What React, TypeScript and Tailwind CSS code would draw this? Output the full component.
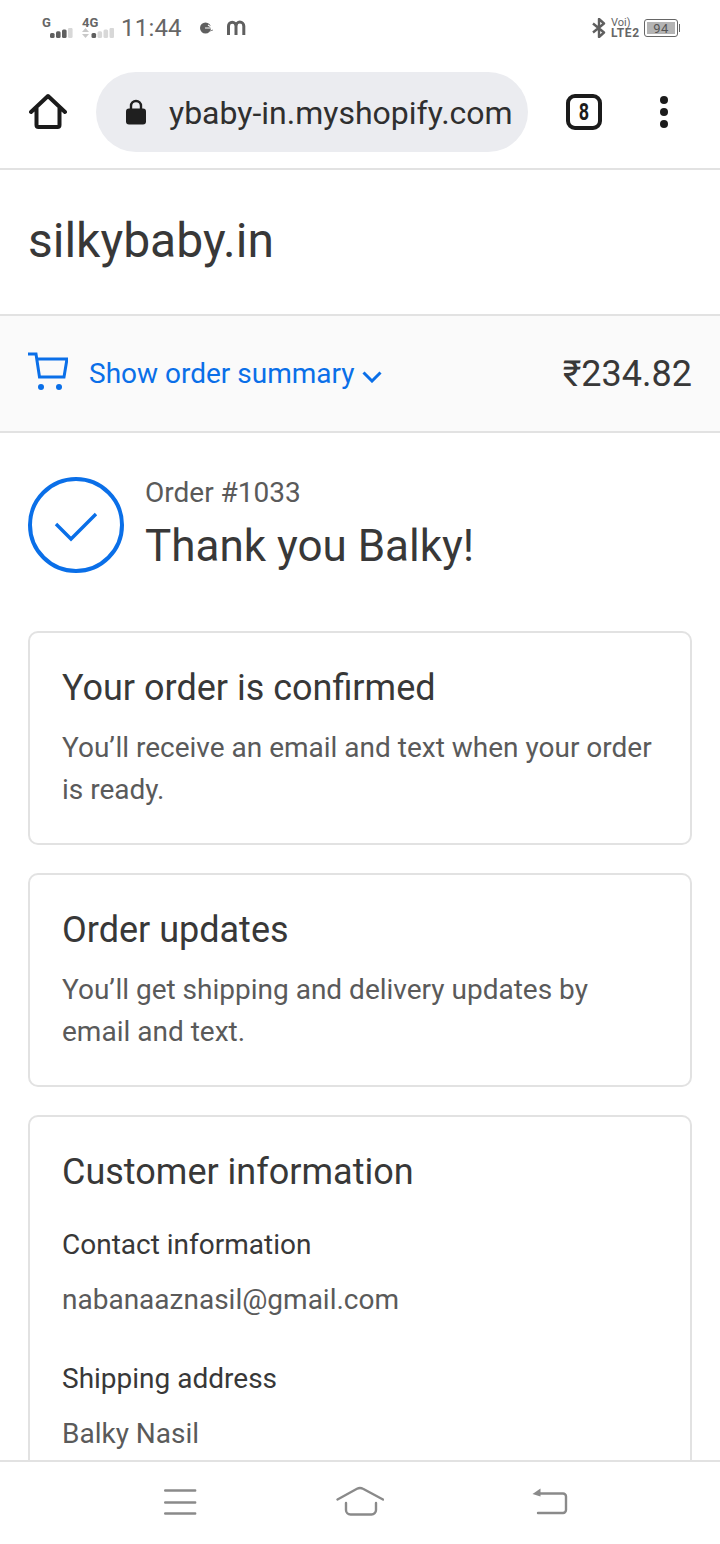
import React from "react"

function Signal({ on, arrows }: { on: number; arrows?: boolean }) {
  const bars = [0, 1, 2, 3]
  return (
    <svg width={arrows ? 32 : 24} height="10" viewBox={arrows ? "0 0 32 10" : "0 0 24 10"} className="block">
      {arrows ? (
        <g fill="#c9c9c9">
          <path d="M3.500 0l3.500 4H0z" />
          <path d="M3.500 10L0 6h7z" />
        </g>
      ) : null}
      {bars.map((b) => {
        const x = (arrows ? 9.500 : 0) + b * 6
        const h = 5 + b * 1.700
        return <rect key={b} x={x} y={10 - h} width="4.600" height={h} rx="1.500" fill={b < on ? "#5f5f5f" : "#d8d8d8"} />
      })}
    </svg>
  )
}

function StatusBar() {
  return (
    <div className="h-[56px] flex items-center justify-between pl-[42px] pr-[40px] text-[#666666]">
      <div className="flex items-center">
        <div className="flex flex-col w-[40px]">
          <span className="text-[13px] leading-[9px] font-bold h-[9px]">G</span>
          <div className="pl-[8px] mt-[1px]"><Signal on={3} /></div>
        </div>
        <div className="flex flex-col w-[32px]">
          <span className="text-[13px] leading-[9px] font-bold h-[9px]">4G</span>
          <div className="mt-[1px]"><Signal on={1} arrows /></div>
        </div>
        <span className="text-[24px] leading-none ml-[7px] tracking-[0.2px]">11:44</span>
        <svg width="16" height="16" viewBox="0 0 16 16" className="ml-[17px]">
          <circle cx="6.500" cy="8" r="5.500" fill="#5f5f5f" />
          <path d="M6 8h9M9 5l3 2" stroke="#fff" strokeWidth="1.200" fill="none" />
          <path d="M11 11l3-1" stroke="#888" strokeWidth="1" />
        </svg>
        <svg width="20" height="16" viewBox="0 0 20 16" className="ml-[12px]">
          <path d="M1.500 15V6a3.600 3.600 0 0 1 7.500 0v9M9 6a3.600 3.600 0 0 1 7.800 0v9" stroke="#5f5f5f" strokeWidth="3" fill="none" />
        </svg>
      </div>
      <div className="flex items-center">
        <svg width="14" height="20" viewBox="0 0 14 20">
          <path d="M1 5.500l11 9-5 4.500V1l5 4.500-11 9" stroke="#5f5f5f" strokeWidth="2.400" fill="none" strokeLinejoin="round" />
        </svg>
        <div className="flex flex-col ml-[5px] w-[33px] font-bold">
          <span className="text-[11px] leading-[9px] font-normal">Voi)</span>
          <span className="text-[12px] leading-[10px] tracking-[0.6px] mt-[1px]">LTE2</span>
        </div>
        <div className="w-[34px] h-[18px] rounded-[3px] border border-[#666666] p-[2px] flex">
          <div className="flex-1 bg-[#b4b4b4] flex items-center justify-center text-[13px] leading-none tracking-[0.5px] text-[#555555]">94</div>
        </div>
        <div className="w-[1px] h-[8px] bg-[#666666] ml-[1px]"></div>
      </div>
    </div>
  )
}

function Toolbar() {
  return (
    <div className="h-[114px] border-b-2 border-[#e2e2e2] flex items-start pt-[16px]">
      <div className="w-[96px] h-[80px] flex items-center justify-center">
        <svg width="38" height="38" viewBox="0 0 38 38">
          <path d="M2 19L19 3l17 16M7.500 15v17a2 2 0 0 0 2 2h19a2 2 0 0 0 2-2V15" stroke="#1b1b1b" strokeWidth="4" fill="none" strokeLinecap="round" strokeLinejoin="round" />
        </svg>
      </div>
      <div className="w-[432px] h-[80px] rounded-[40px] bg-[#ebecf0] flex items-center pl-[30px] overflow-hidden">
        <svg width="20" height="26" viewBox="0 0 20 26" className="shrink-0">
          <path d="M5 11V7a5 5 0 0 1 10 0v4" stroke="#1f1f1f" strokeWidth="2.400" fill="none" />
          <rect x="0" y="9.500" width="20" height="16" rx="3" fill="#1f1f1f" />
        </svg>
        <span className="text-[32px] leading-none ml-[23px] mt-[1px] text-[#2f2f2f] whitespace-nowrap">ybaby-in.myshopify.com</span>
      </div>
      <div className="w-[112px] h-[80px] flex items-center justify-center">
        <div className="w-[36px] h-[36px] rounded-[9px] border-[4px] border-[#1b1b1b] flex items-center justify-center text-[24px] leading-none font-bold text-[#1b1b1b]">
          <span className="block scale-x-[0.75]">8</span>
        </div>
      </div>
      <div className="w-[48px] h-[80px] flex flex-col items-center justify-center gap-[4px]">
        <div className="w-[8px] h-[8px] rounded-full bg-[#1b1b1b]"></div>
        <div className="w-[8px] h-[8px] rounded-full bg-[#1b1b1b]"></div>
        <div className="w-[8px] h-[8px] rounded-full bg-[#1b1b1b]"></div>
      </div>
    </div>
  )
}

function Card({ title, children }: { title: string; children: React.ReactNode }) {
  return (
    <div className="border-2 border-[#e2e2e2] rounded-[10px] px-[32px] pt-[32px] pb-[32px] mb-[28px]">
      <h2 className="text-[36px] leading-[46px] text-[#383838]">{title}</h2>
      {children}
    </div>
  )
}

function NavBar() {
  return (
    <div className="h-[84px] shrink-0 border-t-2 border-[#e2e2e2] bg-white flex items-start">
      <div className="w-[217px] pt-[26px] pl-[163px]">
        <svg width="34" height="28" viewBox="0 0 34 28">
          <path d="M2.200 2.500h30M2.200 14.500h30M2.200 25.500h30" stroke="#8a8a8a" strokeWidth="2.400" strokeLinecap="round" />
        </svg>
      </div>
      <div className="w-[286px] flex justify-center pt-[24px]">
        <svg width="48" height="30" viewBox="0 0 48 30">
          <path d="M1.500 13.500L21 2.800a6 6 0 0 1 6 0l20 10.700M10 17v7a4.500 4.500 0 0 0 4.500 4.500h21A4.500 4.500 0 0 0 40 24v-7" stroke="#8a8a8a" strokeWidth="2.400" fill="none" strokeLinecap="round" />
        </svg>
      </div>
      <div className="flex-1 pt-[26px] pl-[29px]">
        <svg width="36" height="28" viewBox="0 0 36 28">
          <path d="M6 5.500h25a3 3 0 0 1 3 3v13.500a3 3 0 0 1-3 3H6" stroke="#8a8a8a" strokeWidth="2.400" fill="none" strokeLinecap="round" />
          <path d="M.5 6L8.500.5v8z" fill="#8a8a8a" />
        </svg>
      </div>
    </div>
  )
}

export default function App() {
  return (
    <div className="w-[720px] h-[1544px] bg-white flex flex-col overflow-hidden font-['Roboto',sans-serif]">
      <StatusBar />
      <Toolbar />
      <div className="flex-1 min-h-0 overflow-hidden">
        {/* shop name */}
        <div className="h-[144px] flex items-center px-[28px] pb-[3px]">
          <span className="text-[48px] leading-none text-[#383838]">silkybaby.in</span>
        </div>
        {/* summary toggle */}
        <div className="h-[119px] border-y-2 border-[#e2e2e2] bg-[#fafafa] flex items-center px-[28px]">
          <svg width="40" height="38" viewBox="0 0 40 38" className="shrink-0 mb-[6px]">
            <path d="M0 2h8l3.500 23h24.500l3-18H9" stroke="#0a6fe8" strokeWidth="3" fill="none" />
            <circle cx="13" cy="35" r="3" fill="#0a6fe8" />
            <circle cx="31" cy="35" r="3" fill="#0a6fe8" />
          </svg>
          <span className="text-[28px] leading-none text-[#0a6fe8] ml-[21px]">Show order summary</span>
          <svg width="20" height="12" viewBox="0 0 20 12" className="ml-[8px] mt-[6px]">
            <path d="M1.500 1.500L10 10l8.500-8.500" stroke="#0a6fe8" strokeWidth="3" fill="none" />
          </svg>
          <span className="ml-auto text-[36px] leading-none text-[#383838]">₹234.82</span>
        </div>
        {/* thank you header */}
        <div className="flex items-start px-[28px] pt-[44px] pb-[58px]">
          <svg width="96" height="96" viewBox="0 0 96 96" className="shrink-0">
            <circle cx="48" cy="48" r="46" stroke="#0a6fe8" strokeWidth="4" fill="none" />
            <path d="M28 47l15 15 25-25" stroke="#0a6fe8" strokeWidth="3.400" fill="none" />
          </svg>
          <div className="ml-[21px] h-[96px]">
            <div className="text-[28px] leading-[32px] text-[#5a5a5a]">Order #1033</div>
            <div className="text-[44px] leading-[54px] mt-[10px] text-[#383838]">Thank you Balky!</div>
          </div>
        </div>
        <div className="px-[28px]">
          <Card title="Your order is confirmed">
            <p className="text-[28px] leading-[42px] text-[#5a5a5a] mt-[16px]">You’ll receive an email and text when your order is ready.</p>
          </Card>
          <Card title="Order updates">
            <p className="text-[28px] leading-[42px] text-[#5a5a5a] mt-[16px]">You’ll get shipping and delivery updates by email and text.</p>
          </Card>
          <Card title="Customer information">
            <div className="text-[28px] leading-[36px] text-[#383838] mt-[32px]">Contact information</div>
            <div className="text-[28px] leading-[36px] text-[#5a5a5a] mt-[19px]">nabanaaznasil@gmail.com</div>
            <div className="text-[28px] leading-[36px] text-[#383838] mt-[43px]">Shipping address</div>
            <div className="text-[28px] leading-[36px] text-[#5a5a5a] mt-[19px]">Balky Nasil</div>
          </Card>
        </div>
      </div>
      <NavBar />
    </div>
  )
}
